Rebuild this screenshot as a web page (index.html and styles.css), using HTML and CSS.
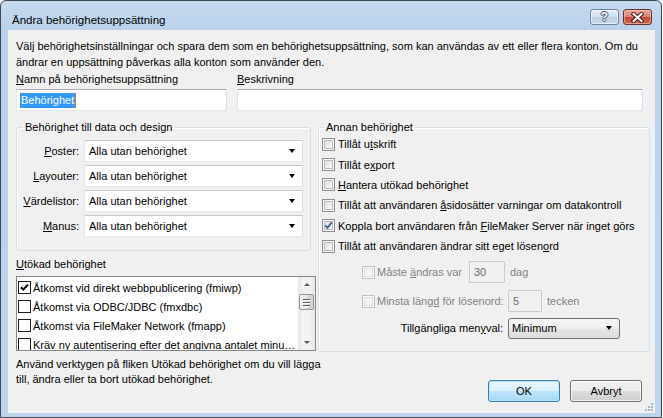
FILE: index.html
```html
<!DOCTYPE html>
<html lang="sv">
<head>
<meta charset="utf-8">
<title>Ändra behörighetsuppsättning</title>
<link rel="stylesheet" href="styles.css">
</head>
<body>
<div class="window">
  <div class="titlebar">
    <span class="title">Ändra behörighetsuppsättning</span>
    <div class="caption">
      <span class="cbtn help">?</span>
      <span class="cbtn close"><svg width="13" height="11" viewBox="0 0 13 11"><path d="M2.5 2 L10.5 9 M10.5 2 L2.5 9" stroke="#4a1a16" stroke-width="4" stroke-linecap="square"/><path d="M2.5 2 L10.5 9 M10.5 2 L2.5 9" stroke="#fff" stroke-width="2" stroke-linecap="square"/></svg></span>
    </div>
  </div>
  <div class="client">
    <p class="intro">Välj behörighetsinställningar och spara dem som en behörighetsuppsättning, som kan användas av ett eller flera konton. Om du<br>ändrar en uppsättning påverkas alla konton som använder den.</p>
    <div class="name-row">
      <div class="field name">
        <span class="lbl"><u>N</u>amn på behörighetsuppsättning</span>
        <div class="textbox"><span class="selected">Behörighet</span></div>
      </div>
      <div class="field desc">
        <span class="lbl"><u>B</u>eskrivning</span>
        <div class="textbox"></div>
      </div>
    </div>
    <div class="main">
      <div class="leftcol">
        <fieldset class="group data">
          <legend>Behörighet till data och design</legend>
          <div class="data-grid">
            <span class="rlbl"><u>P</u>oster:</span><div class="combo"><span>Alla utan behörighet</span><span class="arrow"></span></div>
            <span class="rlbl"><u>L</u>ayouter:</span><div class="combo"><span>Alla utan behörighet</span><span class="arrow"></span></div>
            <span class="rlbl"><u>V</u>ärdelistor:</span><div class="combo"><span>Alla utan behörighet</span><span class="arrow"></span></div>
            <span class="rlbl"><u>M</u>anus:</span><div class="combo"><span>Alla utan behörighet</span><span class="arrow"></span></div>
          </div>
        </fieldset>
        <div class="ext-label"><u>U</u>tökad behörighet</div>
        <div class="listbox">
          <div class="items">
            <div class="item"><span class="lcb"><svg width="11" height="11" viewBox="0 0 11 11"><path d="M2 5.2 L4.3 7.6 L9 2.6" stroke="#000" stroke-width="2" fill="none"/></svg></span><span>Åtkomst vid direkt webbpublicering (fmiwp)</span></div>
            <div class="item"><span class="lcb"></span><span>Åtkomst via ODBC/JDBC (fmxdbc)</span></div>
            <div class="item"><span class="lcb"></span><span>Åtkomst via FileMaker Network (fmapp)</span></div>
            <div class="item"><span class="lcb"></span><span>Kräv ny autentisering efter det angivna antalet minu…</span></div>
          </div>
          <div class="vscroll">
            <span class="sarrow up"></span>
            <span class="thumb"><i></i><i></i><i></i></span>
            <span class="track"></span>
            <span class="sarrow down"></span>
          </div>
        </div>
        <p class="note">Använd verktygen på fliken Utökad behörighet om du vill lägga<br>till, ändra eller ta bort utökad behörighet.</p>
      </div>
      <div class="rightcol">
        <fieldset class="group other">
          <legend>Annan behörighet</legend>
          <div class="checks">
            <div class="crow"><span class="cb"></span><span>Tillåt u<u>t</u>skrift</span></div>
            <div class="crow"><span class="cb"></span><span>Tillåt e<u>x</u>port</span></div>
            <div class="crow"><span class="cb"></span><span><u>H</u>antera utökad behörighet</span></div>
            <div class="crow"><span class="cb"></span><span>Tillåt att användaren <u>å</u>sidosätter varningar om datakontroll</span></div>
            <div class="crow"><span class="cb"><svg width="11" height="11" viewBox="0 0 11 11"><path d="M2.2 5.4 L4.4 7.8 L8.8 2.4" stroke="#4a5f9a" stroke-width="1.9" fill="none"/></svg></span><span>Koppla bort användaren från <u>F</u>ileMaker Server när inget görs</span></div>
            <div class="crow"><span class="cb"></span><span>Tillåt att användaren ändrar sitt eget lösen<u>o</u>rd</span></div>
          </div>
          <div class="sub sub1">
            <span class="cb disabled"></span><span class="dlbl w1">Måste <u>ä</u>ndras var</span><span class="numbox w30">30</span><span class="dunit">dag</span>
          </div>
          <div class="sub sub2">
            <span class="cb disabled"></span><span class="dlbl w2">Minsta läng<u>d</u> för lösenord:</span><span class="numbox w5">5</span><span class="dunit">tecken</span>
          </div>
          <div class="menu-row">
            <span class="mlbl">Tillgängliga men<u>y</u>val:</span>
            <div class="dropdown"><span>Minimum</span><span class="arrow"></span></div>
          </div>
        </fieldset>
        <div class="buttons">
          <span class="btn default">OK</span>
          <span class="btn">Avbryt</span>
        </div>
      </div>
    </div>
    <div class="grip-row">
      <svg class="grip" width="10" height="10" viewBox="0 0 10 10"><g fill="#a8b4c2"><rect x="7" y="1" width="2" height="2"/><rect x="4" y="4" width="2" height="2"/><rect x="7" y="4" width="2" height="2"/><rect x="1" y="7" width="2" height="2"/><rect x="4" y="7" width="2" height="2"/><rect x="7" y="7" width="2" height="2"/></g></svg>
    </div>
  </div>
</div>
</body>
</html>
```

FILE: styles.css
```css
* { box-sizing: border-box; }
html, body { margin: 0; padding: 0; }
body {
  width: 663px;
  height: 418px;
  overflow: hidden;
  background: #ffffff;
  font-family: "Liberation Sans", Arial, sans-serif;
  font-size: 11px;
  color: #000;
}
u { text-decoration: underline; text-underline-offset: 1px; }

.window {
  width: 662px;
  height: 418px;
  border: 1px solid #3e4956;
  border-radius: 6px 6px 0 0;
  background: linear-gradient(#c6daf0, #b9d1ea 30px, #bdd4ed);
  display: flex;
  flex-direction: column;
  padding: 0 6px 7px 7px;
}

.titlebar {
  height: 29px;
  flex: none;
  display: flex;
  justify-content: space-between;
  align-items: flex-start;
}
.title {
  margin: 11px 0 0 4px;
  line-height: 16px;
  font-size: 11.5px;
  color: #000;
}
.caption {
  display: flex;
  gap: 4px;
  margin: 8px 3px 0 0;
}
.cbtn {
  width: 29px;
  height: 16px;
  border-radius: 3px;
  display: flex;
  align-items: center;
  justify-content: center;
}
.help {
  border: 1px solid #6f84a0;
  background: linear-gradient(#e4edf7, #d0deee 50%, #bccfe6 51%, #c9d9ec);
  box-shadow: inset 0 0 0 1px rgba(255,255,255,0.55);
  color: #fff;
  font-weight: bold;
  font-size: 12px;
  line-height: 14px;
  text-shadow: 1px 0 #44556d, -1px 0 #44556d, 0 1px #44556d, 0 -1px #44556d;
}
.close {
  border: 1px solid #6b302b;
  background: linear-gradient(#e8a89d, #d5806f 50%, #c3483a 51%, #cf6a55);
  box-shadow: inset 0 0 0 1px rgba(255,210,200,0.5);
}

.client {
  flex: 1;
  background: #f0f0f0;
  padding: 8px 0 0 8px;
  display: flex;
  flex-direction: column;
}
.intro {
  margin: 0;
  line-height: 16px;
  white-space: nowrap;
}
.name-row {
  display: flex;
  gap: 10px;
  margin-top: 1px;
}
.field { display: flex; flex-direction: column; }
.lbl { line-height: 16px; }
.textbox {
  margin-top: 2px;
  height: 22px;
  background: #fff;
  border: 1px solid;
  border-color: #abadb3 #dbdfe6 #e3e9ef #e2e3ea;
  border-radius: 1px;
  padding: 3px 0 0 3px;
}
.name .textbox { width: 211px; }
.desc .textbox { width: 406px; }
.selected {
  background: #3399ff;
  color: #fff;
  display: inline-block;
  line-height: 15px;
  padding: 0 1px;
  border-right: 1px solid #d07a1a;
}

.main {
  display: grid;
  grid-template-columns: 300px 332px;
  column-gap: 2px;
  margin-top: 9px;
}
.group {
  margin: 0;
  padding: 0;
  min-width: 0;
  border: 1px solid #d5dfe5;
  border-radius: 3px;
  box-shadow: inset 1px 1px 0 #fff;
}
.group legend {
  padding: 0 2px;
  line-height: 14px;
  margin-left: 6px;
}
.other legend { margin-left: 5px; }

.data { width: 295px; }
.data-grid {
  display: grid;
  grid-template-columns: 62px 219px;
  column-gap: 5px;
  row-gap: 3px;
  padding: 6px 0 13px 0;
  align-items: center;
}
.rlbl { text-align: right; }
.combo {
  height: 22px;
  background: #fff;
  border: 1px solid;
  border-color: #c5c8ce #dbdfe6 #e3e9ef #e2e3ea;
  display: flex;
  align-items: center;
  justify-content: space-between;
  padding: 0 7px 0 4px;
}
.arrow {
  width: 0;
  height: 0;
  border-left: 3.5px solid transparent;
  border-right: 3.5px solid transparent;
  border-top: 4px solid #000;
}

.ext-label {
  line-height: 16px;
  margin-top: 5px;
}
.listbox {
  margin-top: 4px;
  height: 75px;
  border: 1px solid #828790;
  background: #fff;
  display: flex;
  overflow: hidden;
}
.items {
  flex: 1;
  overflow: hidden;
  padding: 1px 0 0 1px;
}
.item {
  height: 19px;
  display: flex;
  align-items: center;
  white-space: nowrap;
}
.lcb {
  width: 13px;
  height: 13px;
  border: 1px solid #1e1e1e;
  background: #fff;
  margin-right: 2px;
  display: flex;
  align-items: center;
  justify-content: center;
  flex: none;
}
.vscroll {
  width: 17px;
  flex: none;
  background: linear-gradient(90deg, #e6e6e6, #f2f2f2 30%, #f2f2f2 70%, #e6e6e6);
  display: flex;
  flex-direction: column;
  align-items: center;
}
.sarrow {
  width: 0;
  height: 0;
  border-left: 3px solid transparent;
  border-right: 3px solid transparent;
  flex: none;
}
.sarrow.up { border-bottom: 3px solid #5a5a5a; margin-top: 6px; }
.sarrow.down { border-top: 3px solid #5a5a5a; margin-bottom: 6px; }
.thumb {
  margin-top: 8px;
  width: 15px;
  height: 16px;
  border: 1px solid #979797;
  border-radius: 2px;
  background: linear-gradient(90deg, #f3f3f3, #e8e8e8 50%, #d9d9d9 51%, #d0d0d0);
  display: flex;
  flex-direction: column;
  align-items: center;
  justify-content: center;
  gap: 2px;
  flex: none;
}
.thumb i {
  display: block;
  width: 7px;
  height: 1px;
  background: #5a5a5a;
  box-shadow: 0 1px 0 #fff;
}
.track { flex: 1; }

.note {
  margin: 6px 0 0 0;
  line-height: 15px;
  white-space: nowrap;
}

.other { height: 232px; }
.checks { padding: 0 0 0 3px; }
.crow {
  height: 20.4px;
  display: flex;
  align-items: center;
  white-space: nowrap;
}
.cb {
  width: 13px;
  height: 13px;
  border: 1px solid #8e8f8f;
  background: linear-gradient(135deg, #d6d8db, #f4f4f4 70%, #fff);
  box-shadow: inset 0 0 0 1px #f6f6f6, inset 0 0 0 2px #b9bcc1;
  margin-right: 3px;
  flex: none;
  display: flex;
  align-items: center;
  justify-content: center;
}
.cb.disabled {
  border-color: #c0c0c0;
  background: #f4f4f4;
  box-shadow: inset 0 0 0 1px #fbfbfb, inset 0 0 0 2px #dcdcdc;
  margin-right: 2px;
}
.sub {
  display: flex;
  align-items: center;
  height: 22px;
  padding-left: 43px;
  color: #838383;
  white-space: nowrap;
}
.sub1 { margin-top: 5px; }
.sub2 { margin-top: 7px; }
.dlbl { display: inline-block; }
.w1 { width: 92px; }
.w2 { width: 131px; }
.numbox {
  height: 22px;
  border: 1px solid #c9cbcf;
  border-radius: 1px;
  background: #f0f0f0;
  padding: 4px 0 0 4px;
  line-height: 13px;
  color: #6d6d6d;
}
.w30 { width: 36px; }
.w5 { width: 34px; }
.dunit { margin-left: 5px; }

.menu-row {
  display: flex;
  align-items: center;
  margin-top: 5px;
  height: 22px;
}
.mlbl {
  width: 184px;
  text-align: right;
  margin-right: 5px;
}
.dropdown {
  width: 112px;
  height: 21px;
  border: 1px solid #707070;
  border-radius: 3px;
  background: linear-gradient(#f6f6f6, #eeeeee 50%, #e4e4e4 51%, #dedede);
  display: flex;
  align-items: center;
  justify-content: space-between;
  padding: 0 7px 0 3px;
}

.buttons {
  display: flex;
  justify-content: flex-end;
  gap: 10px;
  margin: 28px 8px 0 0;
}
.btn {
  width: 72px;
  height: 22px;
  border: 1px solid #707070;
  border-radius: 3px;
  background: linear-gradient(#f2f2f2, #ebebeb 50%, #dddddd 51%, #cfcfcf);
  box-shadow: inset 0 0 0 1px rgba(255,255,255,0.7);
  display: flex;
  align-items: center;
  justify-content: center;
}
.btn.default {
  border-color: #3c7fb1;
  background: linear-gradient(#eaf6fd, #d9f0fc 50%, #bee6fd 51%, #a7d9f5);
  box-shadow: inset 0 0 0 1px #aee3fb;
}

.grip-row {
  flex: 1;
  display: flex;
  justify-content: flex-end;
  align-items: flex-end;
}
.grip { display: block; margin: 0 1px 1px 0; }
```
